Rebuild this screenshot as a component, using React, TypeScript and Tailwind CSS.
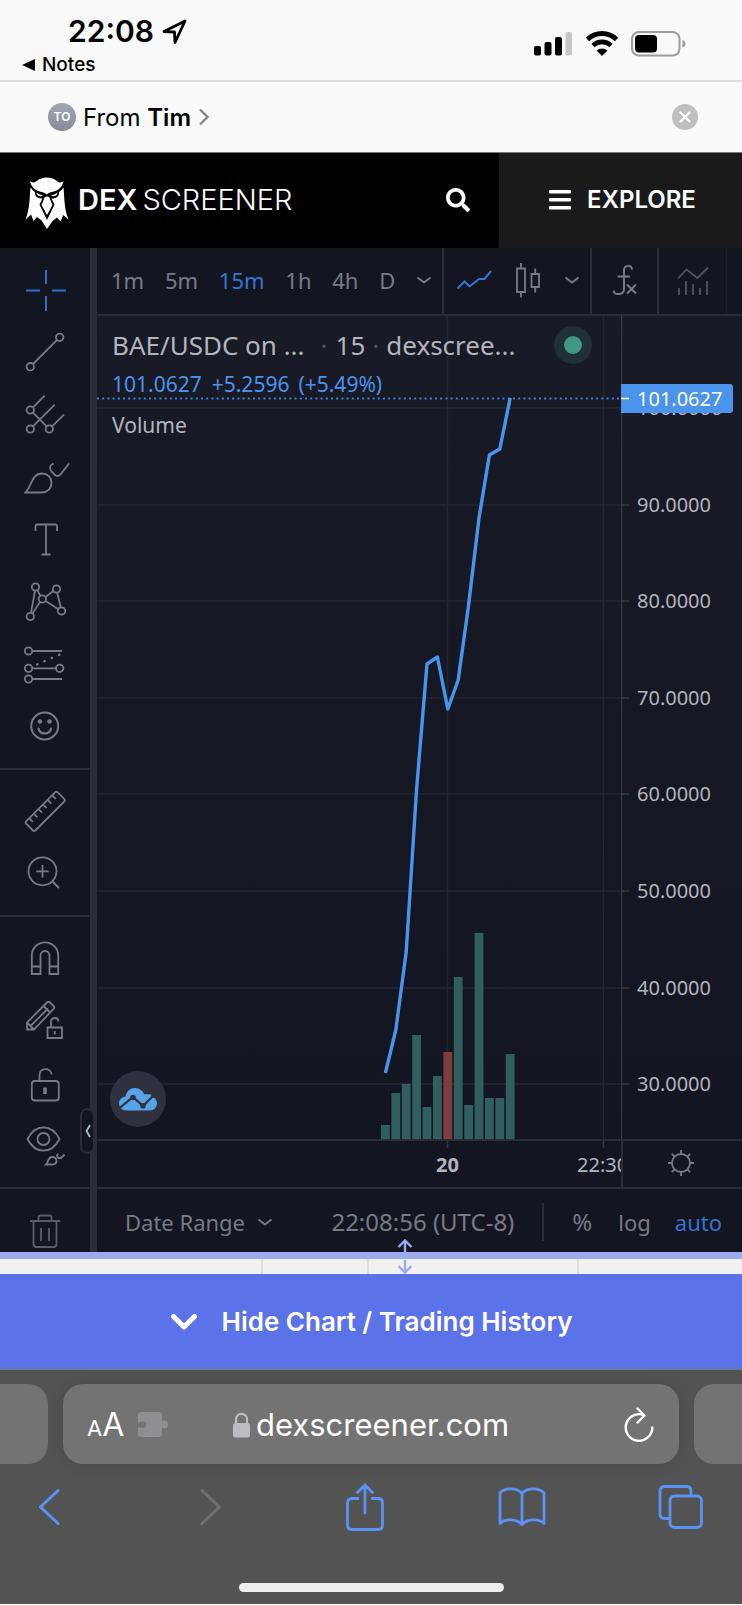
import React from 'react';
import { FaSearch } from 'react-icons/fa';

const intervals = ['1m', '5m', '15m', '1h', '4h', 'D'];

const priceLabels = [
  { label: '100.0000', y: 92 },
  { label: '90.0000', y: 189 },
  { label: '80.0000', y: 285 },
  { label: '70.0000', y: 382 },
  { label: '60.0000', y: 478 },
  { label: '50.0000', y: 575 },
  { label: '40.0000', y: 672 },
  { label: '30.0000', y: 768 },
];

const PLOT_HEIGHT = 823;

// close = y of the line, top = y of the volume bar
const candles = [
  { close: 757, top: 809 },
  { close: 714, top: 777 },
  { close: 636, top: 768 },
  { close: 473, top: 719 },
  { close: 348, top: 791 },
  { close: 341, top: 760 },
  { close: 393, top: 736, down: true },
  { close: 364, top: 661 },
  { close: 289, top: 789 },
  { close: 202, top: 617 },
  { close: 139, top: 782 },
  { close: 133, top: 782 },
  { close: 82, top: 738 },
];

const candleX = (i: number) => 288.4 + i * 10.4;

function ToolIcon({ children, height = 62 }: { children: React.ReactNode; height?: number }) {
  return (
    <svg width="70" height={height} viewBox={`0 0 70 ${height}`} fill="none" stroke="currentColor" strokeWidth="1.8">
      {children}
    </svg>
  );
}

const drawTools = [
  {
    name: 'Cross',
    active: true,
    icon: <path d="M36 11v14M36 37v15M16 31.5h14M42 31.5h14" strokeWidth="2" />,
  },
  {
    name: 'Trend line',
    icon: (
      <>
        <circle cx="20.3" cy="45.7" r="3.7" />
        <circle cx="49.7" cy="16.3" r="3.7" />
        <path d="M23 43 47 19" />
      </>
    ),
  },
  {
    name: 'Pitchfork',
    icon: (
      <>
        <circle cx="20.3" cy="27" r="3.7" />
        <circle cx="20.3" cy="46" r="3.7" />
        <circle cx="39.3" cy="46" r="3.7" />
        <path d="M23 24.3 34.7 12.7M23 43.3 44.7 21.7M42 43.3 54 31.7M23 29.7 36.6 43.3" />
      </>
    ),
  },
  {
    name: 'Brush',
    icon: (
      <>
        <path d="M15.5 47.5C22 40 22 28.500 32 28.500c5.500 0 9.500 4 9.500 9.300 0 5.700-4.300 9.700-10 9.700z" />
        <path d="M43.500 18.500c-4 2-4.500 4.500-2 8l3 3c2 2 4 2 6 0l8.500-11" />
      </>
    ),
  },
  {
    name: 'Text',
    icon: <path d="M25.5 24v-4.5c0-1 .5-2 1.5-2h18.5c1 0 1.5 1 1.5 2V24M36 17.5v29.500M31.500 47.500h9" />,
  },
  {
    name: 'Patterns',
    icon: (
      <>
        <circle cx="25.5" cy="18" r="3.7" />
        <circle cx="46.5" cy="20" r="3.7" />
        <circle cx="32.3" cy="30" r="3.7" />
        <circle cx="20.3" cy="47.5" r="3.7" />
        <circle cx="51.5" cy="42" r="3.7" />
        <path d="M25 22 21 43.7M27.5 21.2 30.3 27M35.5 28 43.3 22M35.5 32 48.2 40M30 33 22.5 44.5M47.2 23.7 50.8 38.3" />
      </>
    ),
  },
  {
    name: 'Prediction',
    icon: (
      <>
        <circle cx="18.5" cy="20" r="3.7" />
        <circle cx="18.5" cy="37.3" r="3.7" />
        <circle cx="49.7" cy="37.3" r="3.7" />
        <circle cx="18.5" cy="48" r="3.7" />
        <path d="M22.2 20H52M22.2 37.3H46M22.2 48H52" />
        <path d="m27 33.500 24-10.500" strokeWidth="2.4" strokeLinecap="round" strokeDasharray="0.5 7.500" />
      </>
    ),
  },
  {
    name: 'Icons',
    icon: (
      <>
        <circle cx="34.7" cy="33" r="13.5" strokeWidth="2" />
        <circle cx="30" cy="28.5" r="2.3" fill="currentColor" stroke="none" />
        <circle cx="39.5" cy="28.5" r="2.3" fill="currentColor" stroke="none" />
        <path d="M28.5 35.500c1 6.500 11.500 6.500 12.500 0" strokeWidth="2.2" strokeLinecap="round" />
      </>
    ),
  },
];

const measureTools = [
  {
    name: 'Measure',
    icon: (
      <g transform="rotate(-45 35.3 31.3)">
        <rect x="13" y="24.8" width="44.5" height="13" rx="2" />
        <path d="M19 25v5M25.5 25v5M32 25v5M38.5 25v5M45 25v5M51.5 25v5" />
      </g>
    ),
  },
  {
    name: 'Zoom in',
    icon: (
      <>
        <circle cx="32.5" cy="29.3" r="14" />
        <path d="m42.500 39.500 6.500 6.500M32.500 23v12.500M26.200 29.300h12.500" />
      </>
    ),
  },
];

const lockTools = [
  {
    name: 'Magnet mode',
    icon: <path d="M21.8 47V28.5a13.2 13.2 0 0 1 26.400 0V47h-8.700V28.500a4.500 4.500 0 0 0-9 0V47zM21.800 39.500h8.700M39.500 39.500h8.700" />,
  },
  {
    name: 'Stay in drawing mode',
    icon: (
      <>
        <path d="M17 40.5v-7L37 13.5c1-1 2-1 3 0l3.5 3.5c1 1 1 2 0 3L24 40.5zM17 33.5l7 7M33.500 17l7 7M20.500 37 38 19.500" />
        <path d="M37.5 38.5H52v10.5H37.5zM41 38.5v-5.5c0-5 7-5.500 7.500-.5M44.700 42v3.500" />
      </>
    ),
  },
  {
    name: 'Lock all drawings',
    icon: (
      <>
        <rect x="21.8" y="30" width="27" height="19.5" rx="3" />
        <path d="M29.5 30V24c0-7.500 11.500-8 12-.5" />
        <path d="M35 36.500v6.500" strokeWidth="3.6" />
      </>
    ),
  },
  {
    name: 'Hide all drawings',
    icon: (
      <>
        <path d="M17.5 26c8-15.500 24-15.500 32 0-8 15.500-24 15.500-32 0z" />
        <circle cx="33.5" cy="26" r="6" />
        <path d="M36 51.500c3-3 2-7.500 6-7.500 2.500 0 4.500 1.500 4.500 3.800s-2 3.700-4.500 3.700zM48.500 41c-2 1-2 2-.5 3.500s2.500 1 4-.5l2.500-2.500" />
      </>
    ),
  },
];

function ToolGroup({ tools }: { tools: { name: string; icon: React.ReactNode; active?: boolean }[] }) {
  return (
    <>
      {tools.map((tool) => (
        <button
          key={tool.name}
          aria-label={tool.name}
          className={`flex h-[62px] w-[90px] justify-center ${tool.active ? 'text-[#2f6fcb]' : 'text-[#787b86]'}`}
        >
          <ToolIcon>{tool.icon}</ToolIcon>
        </button>
      ))}
    </>
  );
}

function Chevron() {
  return (
    <svg width="16" height="9" viewBox="0 0 16 9" fill="none" stroke="currentColor" strokeWidth="2">
      <path d="m1.500 1.500 6.500 5 6.500-5" />
    </svg>
  );
}

function StatusBar() {
  return (
    <div className="flex h-[82px] justify-between border-b-2 border-[#dcdcdc] bg-[#f9f9f9] text-black">
      <div className="pt-3 pl-[22px]">
        <div className="flex items-center gap-2 pl-[46px]">
          <span className="text-3xl leading-[39px] font-semibold">22:08</span>
          <svg width="25" height="25" viewBox="0 0 25 25" fill="none" stroke="currentColor" strokeWidth="2.8" strokeLinejoin="round">
            <path d="M23 2 2 12.500l10.500.5.500 10.500z" />
          </svg>
        </div>
        <a href="#notes" className="flex items-center gap-[7px] text-[19px] leading-7 font-medium">
          <svg width="13" height="12" viewBox="0 0 13 12" fill="currentColor">
            <path d="M0 6 13 0v12z" />
          </svg>
          Notes
        </a>
      </div>
      <div className="flex items-center gap-3 pt-[7px] pr-[56px]">
        <svg width="39" height="25" viewBox="0 0 39 25">
          <rect x="0" y="15" width="7" height="9.5" rx="2" />
          <rect x="10.5" y="11" width="7" height="13.5" rx="2" />
          <rect x="21" y="6" width="7" height="18.5" rx="2" />
          <rect x="31.5" y="1" width="6.5" height="23.5" rx="2" fill="#c6c6c6" />
        </svg>
        <svg width="34" height="25" viewBox="0 0 34 25">
          <path d="M2.500 8.500a20.500 20.500 0 0 1 29 0" fill="none" stroke="black" strokeWidth="4.8" />
          <path d="M8 14.500a13 13 0 0 1 18 0" fill="none" stroke="black" strokeWidth="4.6" />
          <path d="m17 25-5.300-5.300a7.500 7.500 0 0 1 10.600 0z" />
        </svg>
        <svg width="55" height="26" viewBox="0 0 55 26">
          <rect x="1" y="1" width="47.5" height="23.5" rx="7" fill="none" stroke="#9c9c9c" strokeWidth="2" />
          <rect x="4" y="4" width="22" height="17.5" rx="4" />
          <path d="M51.500 9c4 1 4 6.500 0 7.500z" fill="#9c9c9c" />
        </svg>
      </div>
    </div>
  );
}

function SharedFrom() {
  return (
    <div className="flex h-[71px] items-center justify-between border-b border-[#777] bg-[#f9f9f9] pr-11 pl-12 text-black">
      <a href="#tim" className="flex items-center text-2xl">
        <span className="mr-[7px] flex size-7 items-center justify-center rounded-full bg-gradient-to-b from-[#a3a7b4] to-[#868a96] text-xs font-semibold text-white">
          TO
        </span>
        <span className="pt-px">
          From <span className="font-semibold">Tim</span>
        </span>
        <svg className="ml-1.5" width="14" height="18" viewBox="0 0 14 18" fill="none" stroke="#858585" strokeWidth="2.4">
          <path d="m3 1.500 7.500 7.500L3 16.500" />
        </svg>
      </a>
      <button aria-label="Close" className="flex size-[26px] items-center justify-center rounded-full bg-[#bfbfc0]">
        <svg width="12" height="12" viewBox="0 0 12 12" stroke="white" strokeWidth="2.4" strokeLinecap="round">
          <path d="m1.500 1.500 9 9M10.500 1.500l-9 9" />
        </svg>
      </button>
    </div>
  );
}

function Logo() {
  return (
    <svg className="mt-[6px]" width="44" height="52" viewBox="0 0 44 52" fill="white">
      <path d="M5 4c2.500 1.800 4 2 6 .5C17-1 27-1 32.500 4.500c2 1.500 3.500 1.300 6-.5-.8 4-2.500 7-6 9-4 2-8.500 2-10.800 4.500-2.200-2.500-6.700-2.500-10.700-4.500-3.500-2-5.200-5-6-9z" />
      <path d="M5.500 10.500c1.500 2 2.500 3 4.500 4.500-.3 3 1 6 6 6.500h1.500l-3 6 7.500 15.500 7.500-15.500-3-6H28c5-.5 6.300-3.500 6-6.500 2-1.500 3-2.500 4.500-4.500 1 9 .5 22 5 32l-5.200-4.500-2.800 6.500-3.500-4-4.500 3.500L22 52l-5.500-8.500-4.500-3.500-3.500 4L6 37.500.5 42.500c4.500-10 4-23 5-32z" />
      <path d="M22 19.500c1.500 0 3 1 3 2.500l2.500 6L22 38l-5.500-10 2.500-6c0-1.500 1.500-2.500 3-2.500z" />
      <path d="M11.500 15.500c2 1.800 4.500 2.500 6.500 3-2.500 1.500-6.500.5-6.500-3zM32.500 15.500c-2 1.800-4.500 2.500-6.500 3 2.500 1.500 6.500.5 6.500-3z" />
    </svg>
  );
}

function SiteHeader() {
  return (
    <header className="flex h-[95px] bg-black text-white">
      <a href="#home" className="flex flex-1 items-center pb-0.5 pl-[25px]">
        <Logo />
        <span className="ml-[9px] text-[29px] font-semibold">DEX</span>
        <span className="ml-[5px] text-[29px] font-light">SCREENER</span>
      </a>
      <button aria-label="Search" className="px-[29px] pb-0.5">
        <FaSearch size={24} />
      </button>
      <button className="flex w-[243px] items-center justify-center gap-4 bg-[#1a1a1a] pb-0.5 pl-1 text-2xl font-semibold">
        <svg width="22" height="20" viewBox="0 0 22 20" fill="white">
          <rect width="22" height="3.6" rx="1" />
          <rect y="8" width="22" height="3.6" rx="1" />
          <rect y="16" width="22" height="3.6" rx="1" />
        </svg>
        EXPLORE
      </button>
    </header>
  );
}

function DrawingToolbar() {
  return (
    <aside className="relative w-[97px] shrink-0 border-r-[7px] border-[#2a2c38] bg-[#131520]">
      <div className="h-[522px] border-b-2 border-[#2a2c38] pt-[11px]">
        <ToolGroup tools={drawTools} />
      </div>
      <div className="h-[147px] border-b-2 border-[#2a2c38] pt-[10px]">
        <ToolGroup tools={measureTools} />
      </div>
      <div className="h-[272px] border-b-2 border-[#2a2c38] pt-[10px]">
        <ToolGroup tools={lockTools} />
      </div>
      <button aria-label="Remove drawings" className="flex h-[63px] w-[90px] justify-center text-[#5b5e69]">
        <ToolIcon height={63}>
          <path d="M20 32h30M28.500 31.500v-3c0-1.500.5-2 2-2h9c1.500 0 2 .5 2 2v3M23.500 32.500V55c0 2 1 3 3 3h17c2 0 3-1 3-3V32.500M31 39v13M39 39v13" />
        </ToolIcon>
      </button>
      <button
        aria-label="Hide drawings toolbar"
        className="absolute -right-[5px] bottom-[98px] flex h-[46px] w-[15px] items-center justify-center rounded-lg border-2 border-[#2a2c38] bg-[#131520]"
      >
        <svg width="6" height="14" viewBox="0 0 6 14" fill="none" stroke="#a9bcc4" strokeWidth="1.8">
          <path d="M5 1 1.500 7 5 13" />
        </svg>
      </button>
    </aside>
  );
}

function ChartToolbar() {
  return (
    <div className="flex h-[68px] shrink-0 items-stretch border-b-2 border-[#2a2c38] bg-[#131520] text-[#787b86]">
      <div className="flex w-[347px] items-center justify-between border-r-2 border-[#2a2c38] pr-[10px] pb-0.5 pl-[14px] text-[22px]">
        {intervals.map((item) => (
          <button key={item} className={item === '15m' ? 'text-[#3575d3]' : ''}>
            {item}
          </button>
        ))}
        <button aria-label="More intervals">
          <Chevron />
        </button>
      </div>
      <div className="flex w-[148px] items-center justify-between border-r-2 border-[#2a2c38] pr-[10px] pb-0.5 pl-3">
        <button aria-label="Line">
          <svg width="36" height="20" viewBox="0 0 36 20" fill="none" stroke="#3575d3" strokeWidth="2">
            <path d="m1.500 18.500 7-7 5 5L23 9h5.500l6.500-8" />
          </svg>
        </button>
        <button aria-label="Candles">
          <svg width="26" height="36" viewBox="0 0 26 36" fill="none" stroke="currentColor" strokeWidth="1.8">
            <path d="M2 6.500h8V30H2zM6 1v5.500M6 30v5.500M16.500 12H24v13h-7.500zM20.200 6.500V12M20.200 25v5.500" />
          </svg>
        </button>
        <button aria-label="Chart types">
          <Chevron />
        </button>
      </div>
      <button aria-label="Indicators" className="flex w-[67px] items-center justify-center border-r-2 border-[#2a2c38] pb-0.5">
        <svg width="26" height="32" viewBox="0 0 26 32" fill="none" stroke="currentColor" strokeWidth="2">
          <path d="M20 5.500C20 .5 12 .5 12 6.500V25c0 6.500-10 6.500-10.500 1.500M5.500 12.500H18M15 20.500l9 9M24 20.500l-9 9" />
        </svg>
      </button>
      <button aria-label="Financials" className="flex w-[68px] items-center justify-center border-r border-[#1c1e29] text-[#50535e]">
        <svg width="32" height="30" viewBox="0 0 32 30" fill="none" stroke="currentColor" strokeWidth="1.8">
          <path d="m1 12.500 8.500-9 11 8.500L31 1.500M2 22v7M9 15v14M16 18v11M23 22v7M30 15v14" />
        </svg>
      </button>
    </div>
  );
}

function Legend() {
  return (
    <div className="absolute top-[10px] left-[15px] text-[#b2b5be]">
      <div className="flex items-center text-[26px] leading-[34px]">
        <span>BAE/USDC on ...</span>
        <span className="ml-4 text-[#50535e]">·</span>
        <span className="ml-2">15</span>
        <span className="mx-[7px] text-[#50535e]">·</span>
        <span>dexscree...</span>
        <span className="ml-[38px] flex size-[38px] items-center justify-center rounded-full bg-[#1f3036]">
          <span className="size-[18px] rounded-full bg-[#419783]" />
        </span>
      </div>
      <div className="mt-0.5 flex gap-[10px] text-[21px] leading-9 text-[#4a94ec]">
        <span>101.0627</span>
        <span>+5.2596</span>
        <span className="-ml-px">(+5.49%)</span>
      </div>
      <div className="mt-[5px] text-[21px] leading-9">Volume</div>
    </div>
  );
}

function PricePlot() {
  const points = candles.map((c, i) => `${candleX(i)},${c.close}`).join(' ');

  return (
    <div className="relative min-w-0 flex-1">
      <svg className="block h-[823px] w-full" viewBox="0 0 524 823" preserveAspectRatio="none">
        <g stroke="#242631" strokeWidth="1.5">
          {priceLabels.map((p) => (
            <line key={p.label} x1="0" x2="524" y1={p.y} y2={p.y} />
          ))}
          <line x1="350.5" x2="350.5" y1="0" y2="823" />
          <line x1="506.5" x2="506.5" y1="0" y2="823" />
        </g>
        {candles.map((c, i) => (
          <rect
            key={i}
            x={candleX(i) - 4.4}
            y={c.top}
            width="8.8"
            height={PLOT_HEIGHT - c.top}
            fill={c.down ? '#803c40' : '#315f5f'}
          />
        ))}
        <line x1="0" x2="524" y1="82.5" y2="82.5" stroke="#3f7fc9" strokeWidth="1.8" strokeDasharray="2 3.2" />
        <polyline points={points} fill="none" stroke="#4a94ec" strokeWidth="3.4" strokeLinejoin="round" />
      </svg>
      <Legend />
      <a
        href="#tradingview"
        aria-label="TradingView"
        className="absolute bottom-3 left-[13px] flex size-14 items-center justify-center rounded-full bg-[#2f323e]"
      >
        <svg width="40" height="24" viewBox="0 0 40 24" fill="#58a2e8">
          <path d="M8 23.500a7 7 0 0 1-7-7c0-4 3-6.500 6.500-7C8.500 4 12.500 1 17 1c4.500 0 8 3 9.500 6.500 2-.5 4.500-.5 6 0 1 .5 1 1.500 1 2.500 3.500.5 5.500 3 5.500 6.500a7 7 0 0 1-7 7z" />
          <path d="m1 21.500 14-11.500 10 9 10.500-10.500" fill="none" stroke="#2f323e" strokeWidth="2.2" />
          <circle cx="15" cy="10.5" r="2.8" fill="#2f323e" />
          <circle cx="25" cy="18.8" r="2.8" fill="#2f323e" />
        </svg>
      </a>
    </div>
  );
}

function PriceAxis() {
  return (
    <svg className="block h-[823px] w-[121px] shrink-0" viewBox="0 0 121 823" fontSize="20" fill="#b2b5be">
      <line x1="0.5" x2="0.5" y1="0" y2="823" stroke="#363843" strokeWidth="1.5" />
      {priceLabels.map((p) => (
        <g key={p.label}>
          <line x1="1" x2="8" y1={p.y} y2={p.y} stroke="#363843" strokeWidth="1.5" />
          <text x="16" y={p.y + 7}>
            {p.label}
          </text>
        </g>
      ))}
      <path d="M0 68h109q3 0 3 3v23q0 3-3 3H0z" fill="#4a94ec" />
      <line x1="0" x2="8" y1="82.5" y2="82.5" stroke="#fff" strokeWidth="1.5" />
      <text x="16" y="90" fill="#fff">
        101.0627
      </text>
    </svg>
  );
}

function TimeAxis() {
  return (
    <div className="flex h-[50px] shrink-0 border-y-2 border-[#2a2c38]">
      <svg className="block h-[46px] min-w-0 flex-1" viewBox="0 0 524 46" fontSize="20" fill="#b2b5be">
        <path d="M350.5 0v7M506.5 0v7" stroke="#363843" strokeWidth="1.5" />
        <text x="350.5" y="31" textAnchor="middle" fontWeight="700">
          20
        </text>
        <text x="480" y="31">
          22:30
        </text>
      </svg>
      <button aria-label="Chart settings" className="flex w-[121px] items-center justify-center border-l-2 border-[#2a2c38] pr-1 pb-0.5 text-[#787b86]">
        <svg width="28" height="28" viewBox="0 0 28 28" fill="none" stroke="currentColor" strokeWidth="1.8">
          <circle cx="14" cy="14" r="9" />
          <path d="M14 1v4M14 23v4M1 14h4M23 14h4M4.800 4.800l2.800 2.800M20.400 20.400l2.800 2.800M4.800 23.200l2.800-2.800M20.400 7.600l2.800-2.800" />
        </svg>
      </button>
    </div>
  );
}

function ChartFooter() {
  return (
    <div className="flex h-[63px] shrink-0 items-center pt-[3px] pr-5 pl-7 text-[22px] whitespace-nowrap text-[#787b86]">
      <button className="flex items-center gap-3">
        Date Range
        <Chevron />
      </button>
      <button className="ml-auto text-2xl">22:08:56 (UTC-8)</button>
      <div className="mr-7 ml-7 h-[38px] w-[2px] bg-[#2a2c38]" />
      <button className="text-2xl">%</button>
      <button className="ml-[26px]">log</button>
      <button className="ml-6 text-[#3575d3]">auto</button>
    </div>
  );
}

function ResizeStrip() {
  return (
    <div className="relative h-[22px] border-t-[7px] border-[#9eaaf0] bg-[#f1f1f1]">
      <div className="flex h-full">
        <div className="w-[35.5%] border-r-2 border-[#dedede]" />
        <div className="w-[14.2%] border-r-2 border-[#dedede]" />
        <div className="w-[28.4%] border-r-2 border-[#dedede]" />
      </div>
      <svg
        className="absolute -top-5 left-[54.6%] -translate-x-1/2"
        width="16"
        height="36"
        viewBox="0 0 16 36"
        fill="none"
        stroke="#9eaaf0"
        strokeWidth="2.4"
      >
        <path d="M8 1.500v12M1.500 8 8 1.500 14.500 8M8 21v12M1.500 27l6.500 6.500 6.500-6.500" />
      </svg>
    </div>
  );
}

function BrowserBar() {
  return (
    <footer className="border-t border-[#777] bg-[#535353] pt-[14px]">
      <div className="flex h-20 gap-[15px]">
        <div className="w-12 rounded-r-[20px] bg-[#737373]" />
        <div className="flex flex-1 items-center rounded-[20px] bg-[#737373] pt-0.5 pr-6 pl-6 text-white shadow-[0_0_16px_rgba(0,0,0,0.12)]">
          <div className="flex flex-1">
            <button aria-label="Page settings" className="flex items-center gap-[14px]">
              <span className="flex items-baseline">
                <span className="text-[22px]">A</span>
                <span className="text-[32px]">A</span>
              </span>
              <svg width="30" height="26" viewBox="0 0 30 26" fill="#8e8e93">
                <path d="M3 0h18q3 0 3 3v6.500c1-1.500 6-2 6 3s-5 4.500-6 3V22q0 3-3 3H3q-3 0-3-3v-7c2 1 8.500 2 8.500-2.500S2 9.500 0 11V3q0-3 3-3z" />
              </svg>
            </button>
          </div>
          <a href="#dexscreener" className="flex items-center gap-[6px] text-[31px] leading-10">
            <svg width="17" height="26" viewBox="0 0 17 26">
              <rect y="11" width="17" height="14.5" rx="2.5" fill="#bcbcc2" />
              <path d="M3 12V7.500C3 0 14 0 14 7.500V12" fill="none" stroke="#bcbcc2" strokeWidth="2.2" />
            </svg>
            dexscreener.com
          </a>
          <div className="flex flex-1 justify-end">
            <button aria-label="Reload">
              <svg width="32" height="36" viewBox="0 0 32 36" fill="none" stroke="white" strokeWidth="2.4" strokeLinecap="round" strokeLinejoin="round">
                <path d="M20.500 8A13.300 13.300 0 1 0 29.300 20.500M14.500 1.500l7 7-7 7" />
              </svg>
            </button>
          </div>
        </div>
        <div className="w-12 rounded-l-[20px] bg-[#737373]" />
      </div>
      <nav className="flex h-[86px] items-center justify-between pr-[38px] pl-[25px] text-[#5b93f5]">
        <button aria-label="Back" className="flex w-12 justify-center">
          <svg width="24" height="38" viewBox="0 0 24 38" fill="none" stroke="currentColor" strokeWidth="3" strokeLinecap="round" strokeLinejoin="round">
            <path d="M21 2.500 3.500 19 21 35.500" />
          </svg>
        </button>
        <button aria-label="Forward" className="flex w-12 justify-center pl-2 text-[#6f6f6f]">
          <svg width="24" height="38" viewBox="0 0 24 38" fill="none" stroke="currentColor" strokeWidth="3" strokeLinecap="round" strokeLinejoin="round">
            <path d="M3 2.500 20.500 19 3 35.500" />
          </svg>
        </button>
        <button aria-label="Share" className="flex w-12 justify-center">
          <svg width="38" height="48" viewBox="0 0 38 48" fill="none" stroke="currentColor" strokeWidth="2.8" strokeLinecap="round">
            <path d="M12 15.500H6q-4.500 0-4.500 4.500v22q0 4.500 4.500 4.500h26q4.500 0 4.500-4.500V20q0-4.500-4.500-4.500h-6M19 30V3M11.500 9.500 19 2l7.500 7.500" />
          </svg>
        </button>
        <button aria-label="Bookmarks" className="flex w-12 justify-center">
          <svg width="48" height="40" viewBox="0 0 48 40" fill="none" stroke="currentColor" strokeWidth="2.8" strokeLinejoin="round">
            <path d="M24 6.500v31M24 6.500C19 .5 7 .5 2 6v30.500c5-5 17-5 22 1 5-6 17-6 22-1V6C41 .5 29 .5 24 6.500z" />
          </svg>
        </button>
        <button aria-label="Tabs" className="flex w-12 justify-center">
          <svg width="45" height="44" viewBox="0 0 45 44" fill="none" stroke="currentColor" strokeWidth="2.8">
            <rect x="12" y="11" width="31.5" height="31.5" rx="4.5" />
            <path d="M12 33.500H6.500q-4.500 0-4.500-4.500V6q0-4.500 4.500-4.500h22q4.500 0 4.500 4.500v5" />
          </svg>
        </button>
      </nav>
      <div className="flex justify-center pt-[33px] pb-3">
        <div className="h-[9px] w-[265px] rounded-full bg-[#eee]" />
      </div>
    </footer>
  );
}

export default function App() {
  return (
    <div className="w-full bg-[#535353] font-['Inter',sans-serif]">
      <StatusBar />
      <SharedFrom />
      <SiteHeader />
      <main>
        <div className="flex font-['Noto_Sans',sans-serif]">
          <DrawingToolbar />
          <section className="flex min-w-0 flex-1 flex-col bg-[#131520]">
            <ChartToolbar />
            <div className="flex bg-gradient-to-b from-[#181a25] to-[#131520]">
              <PricePlot />
              <PriceAxis />
            </div>
            <TimeAxis />
            <ChartFooter />
          </section>
        </div>
        <ResizeStrip />
        <button className="flex h-[95px] w-full items-center justify-center gap-6 bg-[#5c72e8] text-[26px] font-semibold text-white">
          <svg width="28" height="18" viewBox="0 0 28 18" fill="none" stroke="currentColor" strokeWidth="5" strokeLinecap="round" strokeLinejoin="round">
            <path d="m3.500 3.500 10.500 10.500 10.500-10.500" />
          </svg>
          Hide Chart / Trading History
        </button>
      </main>
      <BrowserBar />
    </div>
  );
}
